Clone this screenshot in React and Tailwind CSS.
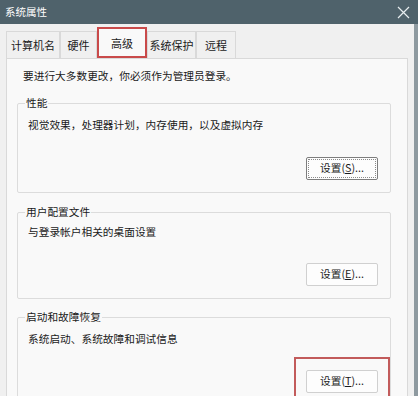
import React from 'react';

const font = { fontFamily: '"Microsoft YaHei", "Noto Sans CJK SC", sans-serif' };

function Tab({ label, width, active }) {
  return (
    <div
      className={
        'flex items-center justify-center border border-b-0 border-[#d9d9d9] text-[11px] text-[#1a1a1a] ' +
        (active ? 'h-[31px] bg-[#f9f9f9]' : 'h-[27px] bg-[#f0f0f0]')
      }
      style={{ width }}
    >
      {label}
    </div>
  );
}

function SetButton({ hotkey, focused }) {
  return (
    <button
      className={
        'flex h-[23px] w-[72px] items-center justify-center rounded-[2px] bg-[#fdfdfd] text-[10.7px] text-[#1a1a1a] ' +
        (focused ? 'border border-[#7d7d7d] outline-1 outline-dotted outline-[#8a8a8a] -outline-offset-[3px]' : 'border border-[#d0d0d0]')
      }
    >
      设置(<span className="underline">{hotkey}</span>)...
    </button>
  );
}

function Group({ title, desc, hotkey, focused, className, descGap, btnGap }) {
  return (
    <fieldset className={'rounded-[2px] border border-[#dcdcdc] px-[9px] pb-[12px] ' + className}>
      <legend className="ml-[-2px] px-[1px] text-[10.7px] leading-[14px] text-[#1a1a1a]">{title}</legend>
      <div className={'pl-[1px] text-[10.7px] leading-[14px] text-[#1a1a1a] ' + descGap}>{desc}</div>
      <div className={'flex justify-end pr-[3px] ' + btnGap}>
        <SetButton hotkey={hotkey} focused={focused} />
      </div>
    </fieldset>
  );
}

export default function App() {
  return (
    <div className="relative h-[396px] w-[418px] overflow-hidden bg-[#f0f0f0]" style={font}>
      {/* Title bar */}
      <div className="flex h-[24px] items-center justify-between bg-[#4f626b] pl-[5px] pr-[8px]">
        <span className="text-[10.5px] text-white">系统属性</span>
        <svg width="13" height="13" viewBox="0 0 13 13" className="text-[#e8eef0]">
          <path d="M1 1L12 12M12 1L1 12" stroke="currentColor" strokeWidth="1.2" />
        </svg>
      </div>

      <div className="flex">
        <div className="w-[414px] pl-[6px] pr-[6px]">
          {/* Tabs */}
          <div className="flex h-[34px] items-end">
            <Tab label="计算机名" width={54} />
            <Tab label="硬件" width={37} />
            <Tab label="高级" width={50} active />
            <Tab label="系统保护" width={49} />
            <Tab label="远程" width={40} />
          </div>

          {/* Panel */}
          <div className="h-[400px] border border-[#d9d9d9] bg-[#f9f9f9] pl-[10px] pr-[16px]">
            <div className="mt-[10px] pl-[6px] text-[10.7px] leading-[14px] text-[#1a1a1a]">
              要进行大多数更改，你必须作为管理员登录。
            </div>
            <Group
              title="性能"
              desc="视觉效果，处理器计划，内存使用，以及虚拟内存"
              hotkey="S"
              focused
              className="mt-[13px]"
              descGap="mt-[8px]"
              btnGap="mt-[25px]"
            />
            <Group
              title="用户配置文件"
              desc="与登录帐户相关的桌面设置"
              hotkey="E"
              className="mt-[12px]"
              descGap="mt-[6px]"
              btnGap="mt-[24px]"
            />
            <Group
              title="启动和故障恢复"
              desc="系统启动、系统故障和调试信息"
              hotkey="T"
              className="mt-[11px]"
              descGap="mt-[8px]"
              btnGap="mt-[24px]"
            />
          </div>
        </div>
        <div className="h-[380px] w-[4px] bg-[#8e9aa0]" />
      </div>

      {/* Red annotation boxes */}
      <div className="absolute left-[97px] top-[27px] h-[31px] w-[50px] border-2 border-[#c94a4a]" />
      <div className="absolute left-[294px] top-[357px] h-[60px] w-[96px] border-2 border-[#c25b5b]" />
    </div>
  );
}
